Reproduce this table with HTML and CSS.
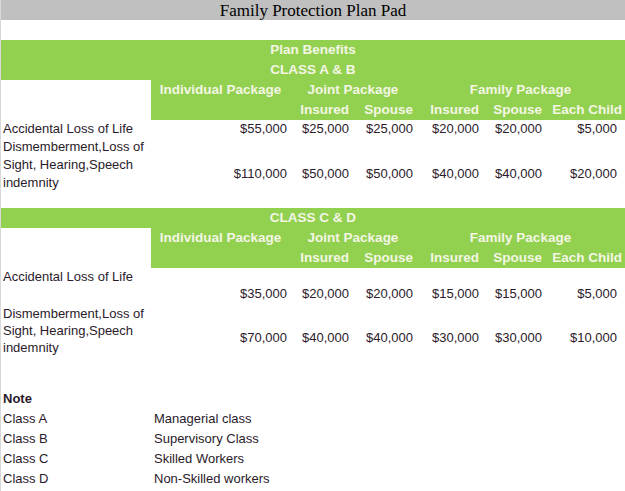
FILE: index.html
```html
<!DOCTYPE html>
<html lang="en">
<head>
    <meta charset="UTF-8">
    <meta name="viewport" content="width=device-width, initial-scale=1.0">
    <title>Family Protection Plan Pad</title>
    <link rel="stylesheet" href="styles.css">
</head>
<body>
    <div class="page">
        <h1 class="title">Family Protection Plan Pad</h1>
        <div class="spacer"></div>

        <div class="band">Plan Benefits</div>
        <div class="band">CLASS A &amp; B</div>
        <div class="head">
            <div class="blank"></div>
            <div class="pkg pkg-ind">Individual Package</div>
            <div class="pkg pkg-joint">Joint Package</div>
            <div class="pkg pkg-family">Family Package</div>
            <div class="sub"></div>
            <div class="sub">Insured</div>
            <div class="sub">Spouse</div>
            <div class="sub">Insured</div>
            <div class="sub">Spouse</div>
            <div class="sub last">Each Child</div>
        </div>
        <div class="row">
            <div class="label">Accidental Loss of Life</div>
            <div class="val">$55,000</div>
            <div class="val">$25,000</div>
            <div class="val">$25,000</div>
            <div class="val">$20,000</div>
            <div class="val">$20,000</div>
            <div class="val last">$5,000</div>
        </div>
        <div class="row row-wide">
            <div class="label">Dismemberment,Loss of Sight, Hearing,Speech indemnity</div>
            <div class="val">$110,000</div>
            <div class="val">$50,000</div>
            <div class="val">$50,000</div>
            <div class="val">$40,000</div>
            <div class="val">$40,000</div>
            <div class="val last">$20,000</div>
        </div>

        <div class="gap"></div>

        <div class="band">CLASS C &amp; D</div>
        <div class="head">
            <div class="blank"></div>
            <div class="pkg pkg-ind">Individual Package</div>
            <div class="pkg pkg-joint">Joint Package</div>
            <div class="pkg pkg-family">Family Package</div>
            <div class="sub"></div>
            <div class="sub">Insured</div>
            <div class="sub">Spouse</div>
            <div class="sub">Insured</div>
            <div class="sub">Spouse</div>
            <div class="sub last">Each Child</div>
        </div>
        <div class="row row-split">
            <div class="label">Accidental Loss of Life</div>
            <div class="val">$35,000</div>
            <div class="val">$20,000</div>
            <div class="val">$20,000</div>
            <div class="val">$15,000</div>
            <div class="val">$15,000</div>
            <div class="val last">$5,000</div>
        </div>
        <div class="row row-wide row-tight">
            <div class="label">Dismemberment,Loss of Sight, Hearing,Speech indemnity</div>
            <div class="val">$70,000</div>
            <div class="val">$40,000</div>
            <div class="val">$40,000</div>
            <div class="val">$30,000</div>
            <div class="val">$30,000</div>
            <div class="val last">$10,000</div>
        </div>

        <div class="notes">
            <div class="note-title">Note</div>
            <div class="note"><span>Class A</span><span>Managerial class</span></div>
            <div class="note"><span>Class B</span><span>Supervisory Class</span></div>
            <div class="note"><span>Class C</span><span>Skilled Workers</span></div>
            <div class="note"><span>Class D</span><span>Non-Skilled workers</span></div>
        </div>
    </div>
</body>
</html>
```

FILE: styles.css
```css
body {
    margin: 0;
    background-color: #fff;
    font-family: 'Liberation Sans', Arial, sans-serif;
    font-size: 13px;
    color: #2a1a2a;
}

.page {
    width: 624px;
    min-height: 491px;
    border-left: 1px solid #d8d8d8;
}

.title {
    margin: 0;
    height: 20px;
    line-height: 21px;
    background-color: #c0c0c0;
    text-align: center;
    font-family: 'Liberation Serif', 'Times New Roman', serif;
    font-size: 17px;
    font-weight: normal;
    color: #000;
}

.spacer {
    height: 20px;
}

.band {
    height: 20px;
    line-height: 20px;
    background-color: #92d050;
    color: #f4f6e4;
    font-weight: bold;
    text-align: center;
    font-size: 13.5px;
}

.head {
    display: grid;
    grid-template-columns: 150px 139px 62px 64px 66px 63px 80px;
    grid-template-rows: 20px 20px;
    color: #f4f6e4;
    font-weight: bold;
    font-size: 13.5px;
    line-height: 20px;
}

.head .blank {
    grid-row: 1 / 3;
    background-color: #fff;
}

.pkg, .sub {
    background-color: #92d050;
    white-space: nowrap;
}

.pkg {
    text-align: center;
}

.pkg-joint {
    grid-column: span 2;
}

.pkg-family {
    grid-column: span 3;
}

.sub {
    text-align: right;
    padding-right: 3px;
}

.row {
    display: grid;
    grid-template-columns: 150px 139px 62px 64px 66px 63px 80px;
    line-height: 18px;
}

.label {
    padding-left: 2px;
    padding-right: 4px;
}

.val {
    text-align: right;
    padding-right: 3px;
    white-space: nowrap;
}

.val.last {
    padding-right: 8px;
}

.row-wide .val {
    padding-top: 27px;
}

.row-split {
    height: 36px;
}

.row-split .val {
    padding-top: 17px;
}

.row-tight {
    line-height: 17px;
}

.row-tight .label {
    padding-top: 1px;
}

.row-tight .val {
    padding-top: 25px;
}

.gap {
    height: 16px;
}

.notes {
    padding-top: 33px;
}

.note-title {
    height: 20px;
    line-height: 20px;
    padding-left: 2px;
    font-weight: bold;
}

.note {
    display: grid;
    grid-template-columns: 150px 1fr;
    height: 20px;
    line-height: 20px;
}

.note span:first-child {
    padding-left: 2px;
}

.note span:last-child {
    padding-left: 3px;
}
```
